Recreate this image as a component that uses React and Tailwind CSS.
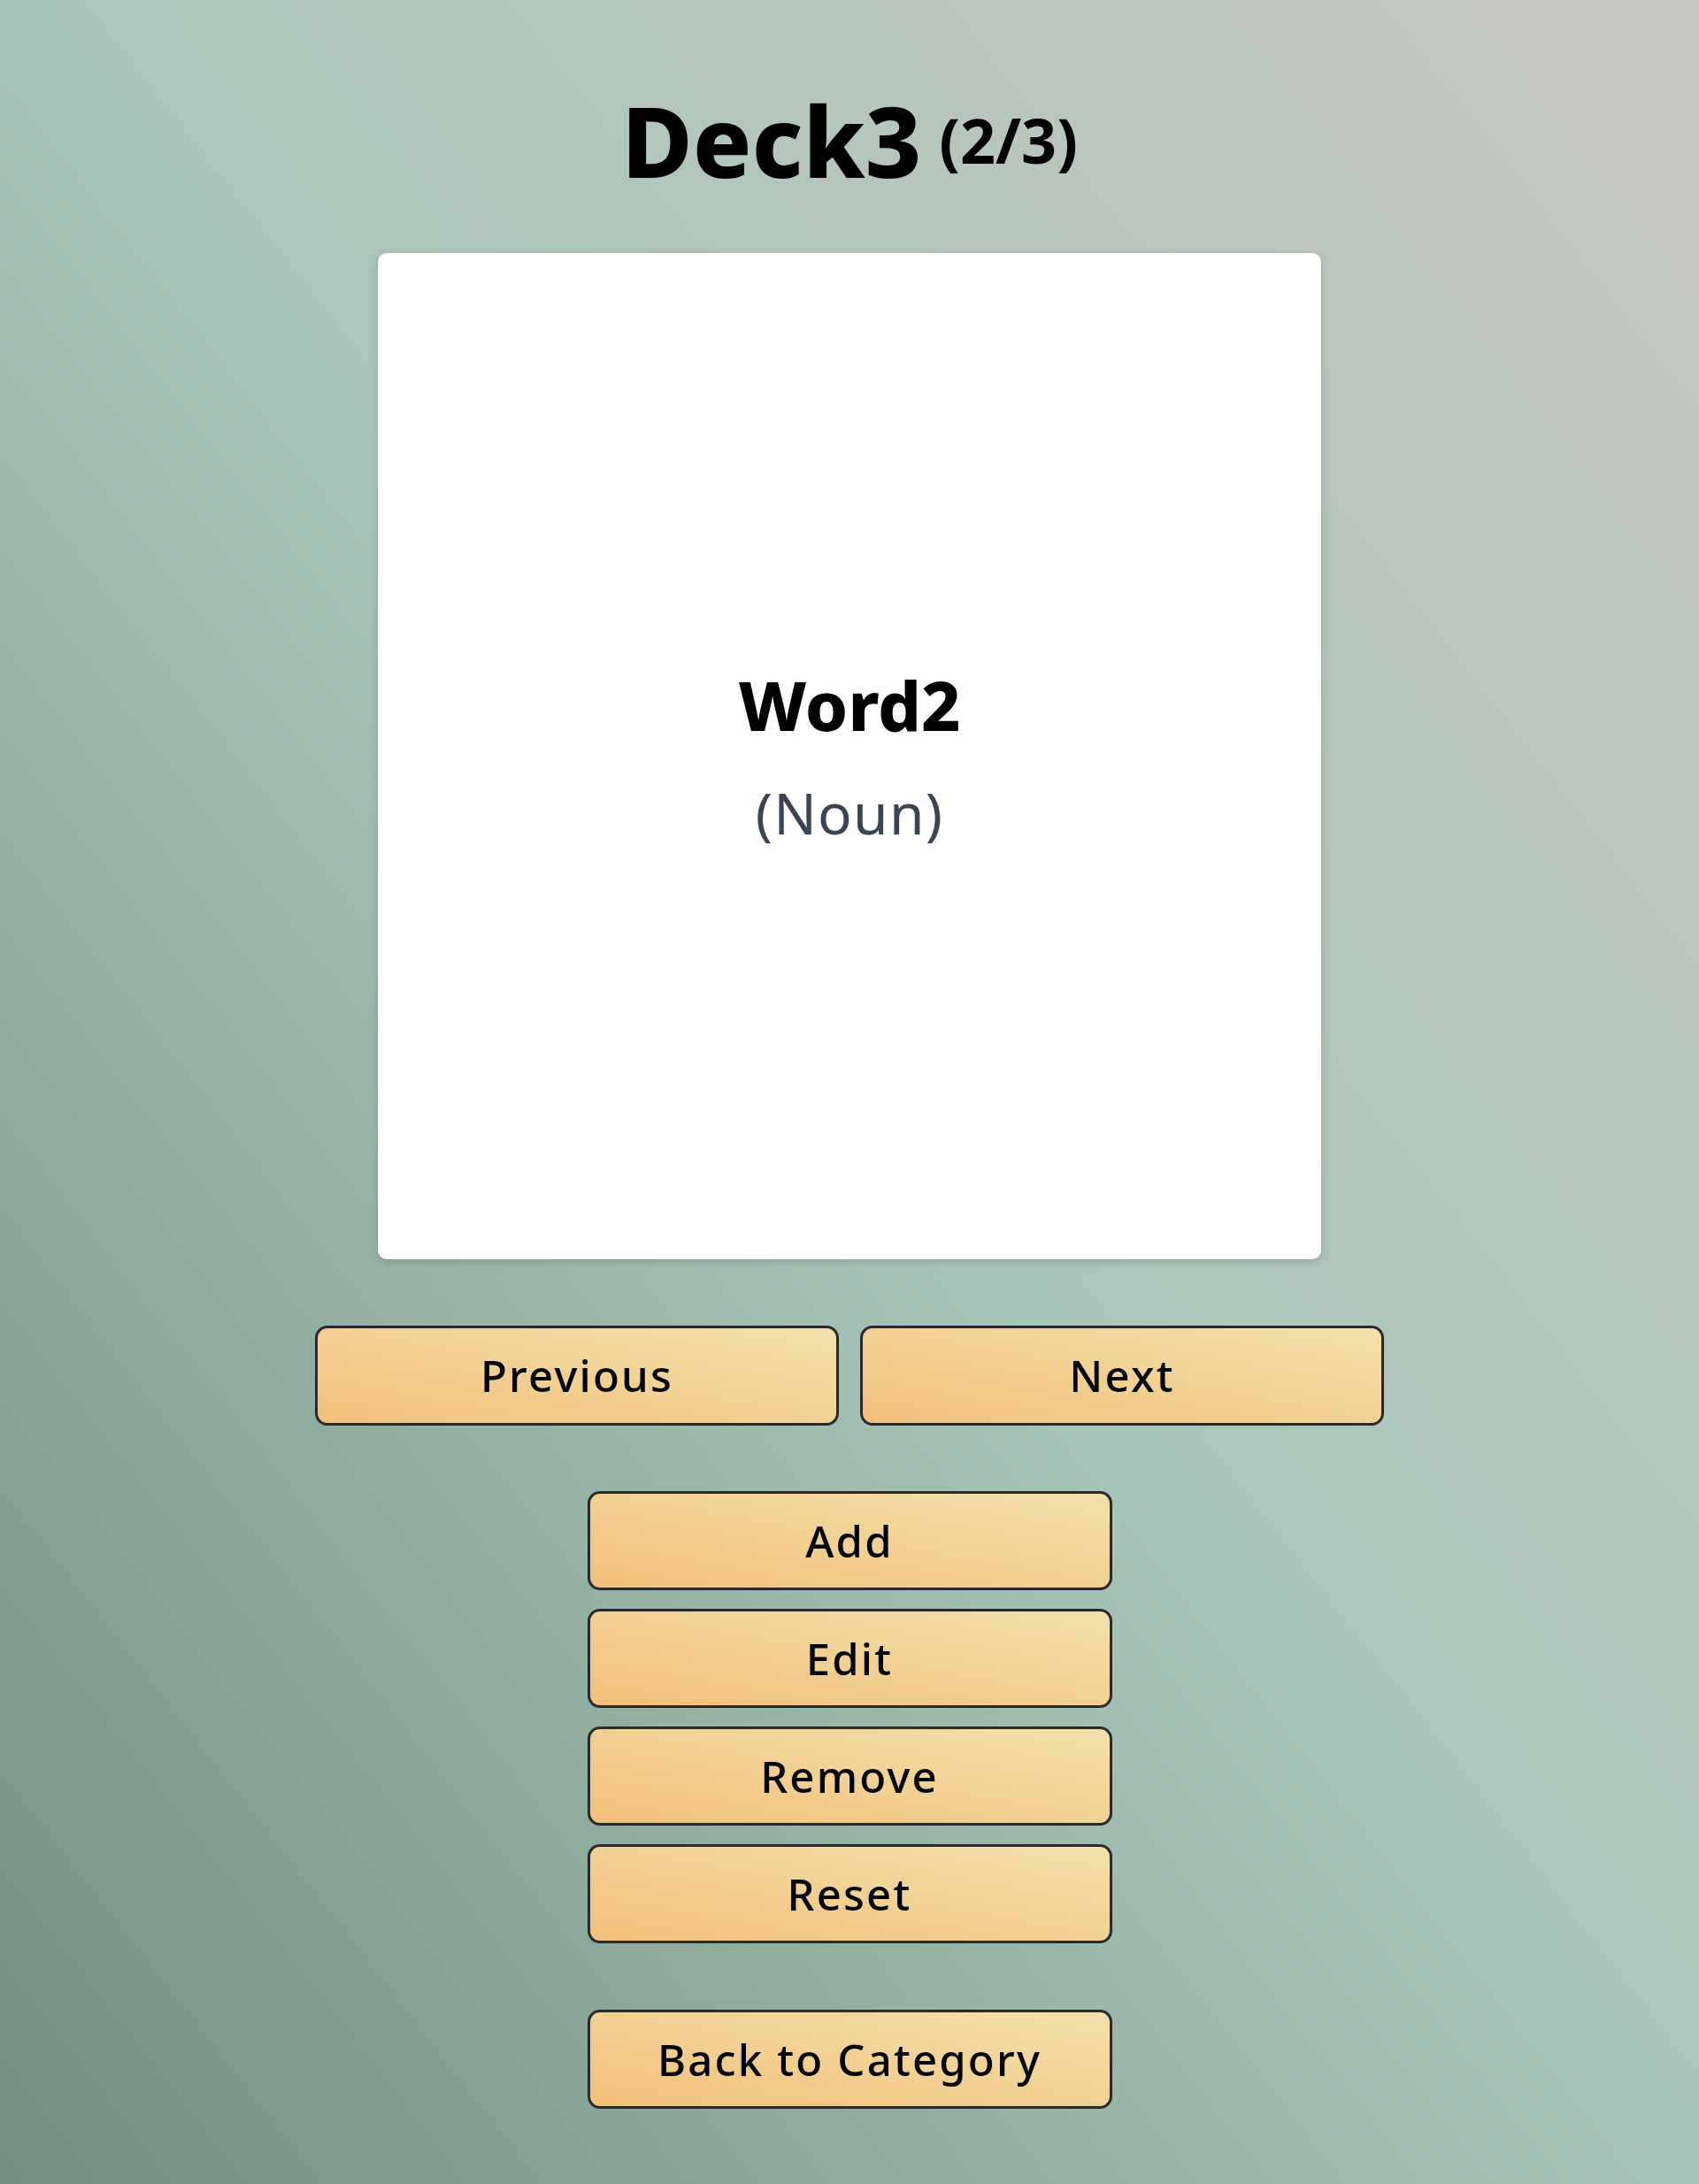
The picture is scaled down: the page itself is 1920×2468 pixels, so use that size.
import React from "react"

const btn =
    "flex items-center justify-center h-[112px] rounded-[14px] border-[3px] border-[#2a2a2a] bg-[linear-gradient(to_top_right,#f1c07b,#f4e1ad)] text-black text-[49px] font-medium tracking-[0.045em] leading-none cursor-pointer select-none"

export default function App() {
    const actions = ["Add", "Edit", "Remove", "Reset"]

    return (
        <div
            className="min-h-screen w-full flex flex-col items-center bg-[linear-gradient(to_top_right,#748f80_0%,#a9c6ba_50%,#c6c6c0_100%)]"
            style={{ fontFamily: '"Noto Sans", "Open Sans", sans-serif' }}
        >
            {/* TITULO */}
            <h1 className="mt-[103px] flex items-center gap-5 text-black">
                <span className="text-[110px] font-extrabold leading-none">Deck3</span>
                <span className="text-[70px] font-bold leading-none">(2/3)</span>
            </h1>

            {/* TARJETA */}
            <div className="mt-[73px] w-[1066px] h-[1137px] bg-white rounded-[10px] shadow-[0_2px_10px_rgba(0,0,0,0.18)] flex flex-col items-center justify-center">
                <span className="text-[77px] font-extrabold leading-none text-black">Word2</span>
                <span className="mt-[52px] text-[64px] leading-none tracking-[0.02em] text-[#3a4454]">(Noun)</span>
            </div>

            {/* ANTERIOR / SIGUIENTE */}
            <div className="mt-[75px] flex gap-6">
                <div className={`${btn} w-[592px] h-[113px]`}>Previous</div>
                <div className={`${btn} w-[592px] h-[113px]`}>Next</div>
            </div>

            {/* ACCIONES */}
            <div className="mt-[74px] flex flex-col gap-[21px]">
                {actions.map((a) => (
                    <div key={a} className={`${btn} w-[593px] h-[111px]`}>
                        {a}
                    </div>
                ))}
            </div>

            <div className={`${btn} mt-[75px] w-[593px]`}>Back to Category</div>
        </div>
    )
}
